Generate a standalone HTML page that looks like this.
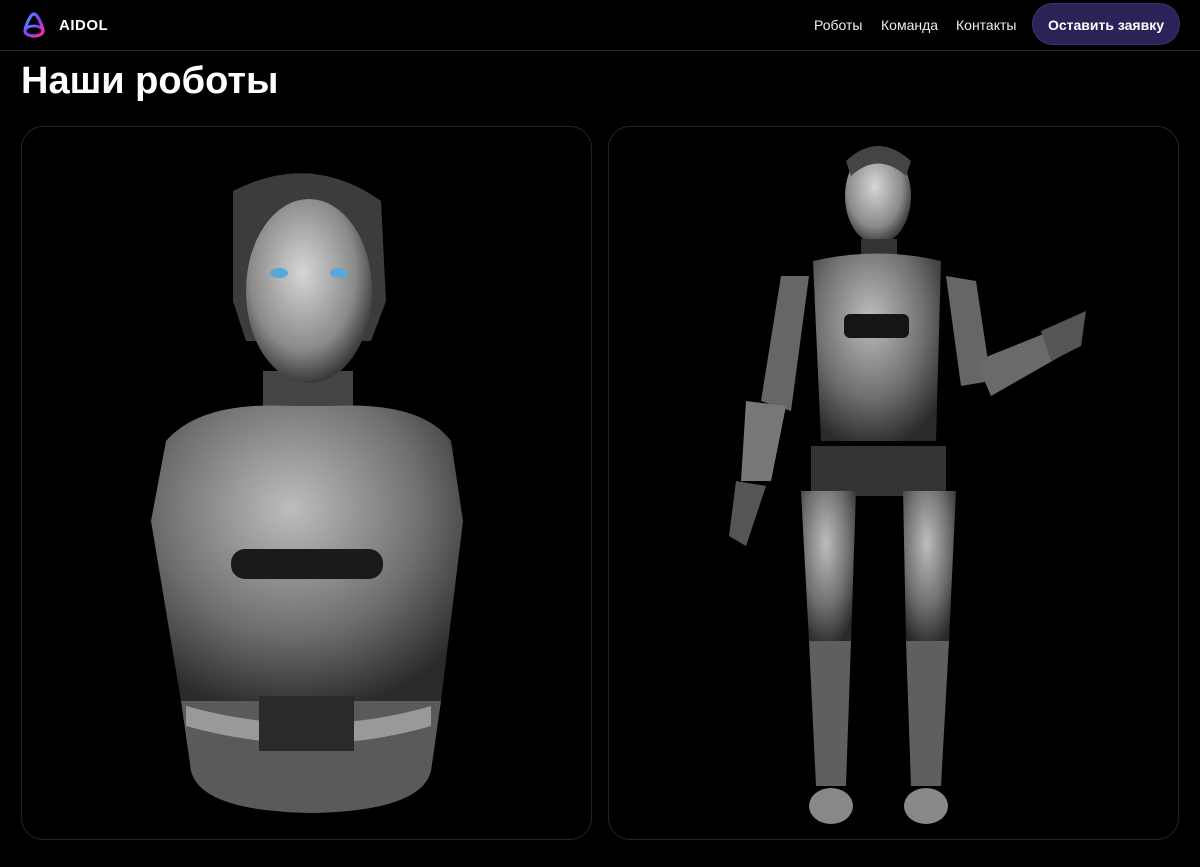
<!DOCTYPE html>
<html><head><meta charset="utf-8"><style>
*{margin:0;padding:0;box-sizing:border-box}
body{width:1200px;height:867px;background:#000;color:#fff;font-family:"Liberation Sans",sans-serif;overflow:hidden;position:relative}
.hdr{position:absolute;left:0;top:0;width:1200px;height:51px;border-bottom:1px solid #262626}
.logo{position:absolute;left:22px;top:11px}
.brand{position:absolute;left:59px;top:17px;font-size:15px;font-weight:bold;letter-spacing:.5px}
.nav{position:absolute;top:17px;font-size:14px;color:#eee}
.btn{position:absolute;left:1032px;top:3px;width:148px;height:42px;border-radius:21px;background:#2c2257;border:1px solid #3c3170;font-size:14px;font-weight:bold;text-align:center;line-height:42px}
h1{position:absolute;left:21px;top:60px;font-size:38px;font-weight:bold}
.card{position:absolute;top:126px;height:714px;border:1px solid #242424;border-radius:22px;overflow:hidden}
</style></head><body>
<div class="hdr">
<svg class="logo" width="24" height="28" viewBox="0 0 24 28"><defs><linearGradient id="lg" x1="0" y1="0" x2="1" y2="1"><stop offset="0" stop-color="#3aa0ff"/><stop offset=".5" stop-color="#8a3cff"/><stop offset="1" stop-color="#ff2aa0"/></linearGradient></defs><path d="M12 3C8 3 3 17 3 20c0 3 4 5 9 5s9-2 9-5C21 17 16 3 12 3z" fill="none" stroke="url(#lg)" stroke-width="3.2"/><path d="M4 18c3-4 13-4 16 0" fill="none" stroke="url(#lg)" stroke-width="2.8"/></svg>
<div class="brand">AIDOL</div>
<div class="nav" style="left:814px">Роботы</div>
<div class="nav" style="left:881px">Команда</div>
<div class="nav" style="left:956px">Контакты</div>
<div class="btn">Оставить заявку</div>
</div>
<h1>Наши роботы</h1>
<div class="card" style="left:21px;width:571px">
<svg width="571" height="714" viewBox="21 126 571 714">
<defs><radialGradient id="g1" cx=".45" cy=".35" r=".7"><stop offset="0" stop-color="#bdbdbd"/><stop offset=".6" stop-color="#6f6f6f"/><stop offset="1" stop-color="#2a2a2a"/></radialGradient>
<radialGradient id="g2" cx=".45" cy=".4" r=".6"><stop offset="0" stop-color="#d6d6d6"/><stop offset=".7" stop-color="#8a8a8a"/><stop offset="1" stop-color="#3a3a3a"/></radialGradient></defs>
<rect x="262" y="370" width="90" height="60" fill="#444"/>
<path d="M165 440 Q200 400 290 405 L330 405 Q420 400 450 440 L462 520 L440 700 L180 700 L150 520 Z" fill="url(#g1)"/>
<path d="M180 700 L440 700 L430 770 Q420 810 310 812 Q200 810 190 770 Z" fill="#5a5a5a"/>
<path d="M185 705 Q310 740 430 705 L430 725 Q310 760 185 725Z" fill="#999"/>
<rect x="258" y="695" width="95" height="55" fill="#2a2a2a"/>
<rect x="230" y="548" width="152" height="30" rx="14" fill="#1a1a1a"/>
<path d="M232 190 Q310 150 380 200 L385 300 L370 340 L245 340 L232 300Z" fill="#3c3c3c"/>
<ellipse cx="308" cy="290" rx="63" ry="92" fill="url(#g2)"/>
<ellipse cx="278" cy="272" rx="9" ry="5" fill="#58a7d8"/><ellipse cx="338" cy="272" rx="9" ry="5" fill="#58a7d8"/>
</svg></div>
<div class="card" style="left:608px;width:571px">
<svg width="571" height="714" viewBox="608 126 571 714">
<ellipse cx="877" cy="195" rx="33" ry="48" fill="url(#g2)"/>
<path d="M845 160 Q877 130 910 160 L905 175 Q877 150 850 175Z" fill="#444"/>
<rect x="860" y="238" width="36" height="20" fill="#333"/>
<path d="M812 260 Q877 245 940 260 L935 440 L820 440 Z" fill="url(#g1)"/>
<rect x="843" y="313" width="65" height="24" rx="6" fill="#151515"/>
<path d="M780 275 L808 275 L790 410 L760 400Z" fill="#666"/>
<path d="M745 400 L785 405 L770 480 L740 480Z" fill="#777"/>
<path d="M735 480 L765 485 L745 545 L728 535Z" fill="#555"/>
<path d="M945 275 L975 280 L990 380 L960 385Z" fill="#666"/>
<path d="M975 360 L1050 330 L1060 355 L990 395Z" fill="#6a6a6a"/>
<path d="M1040 330 L1085 310 L1080 345 L1050 360Z" fill="#555"/>
<rect x="810" y="445" width="135" height="50" fill="#333"/>
<path d="M800 490 L855 490 L850 640 L808 640Z" fill="url(#g1)"/>
<path d="M902 490 L955 490 L948 640 L905 640Z" fill="url(#g1)"/>
<path d="M808 640 L850 640 L845 785 L815 785Z" fill="#5f5f5f"/>
<path d="M905 640 L948 640 L940 785 L910 785Z" fill="#5f5f5f"/>
<ellipse cx="830" cy="805" rx="22" ry="18" fill="#888"/>
<ellipse cx="925" cy="805" rx="22" ry="18" fill="#888"/>
</svg></div>
</body></html>
